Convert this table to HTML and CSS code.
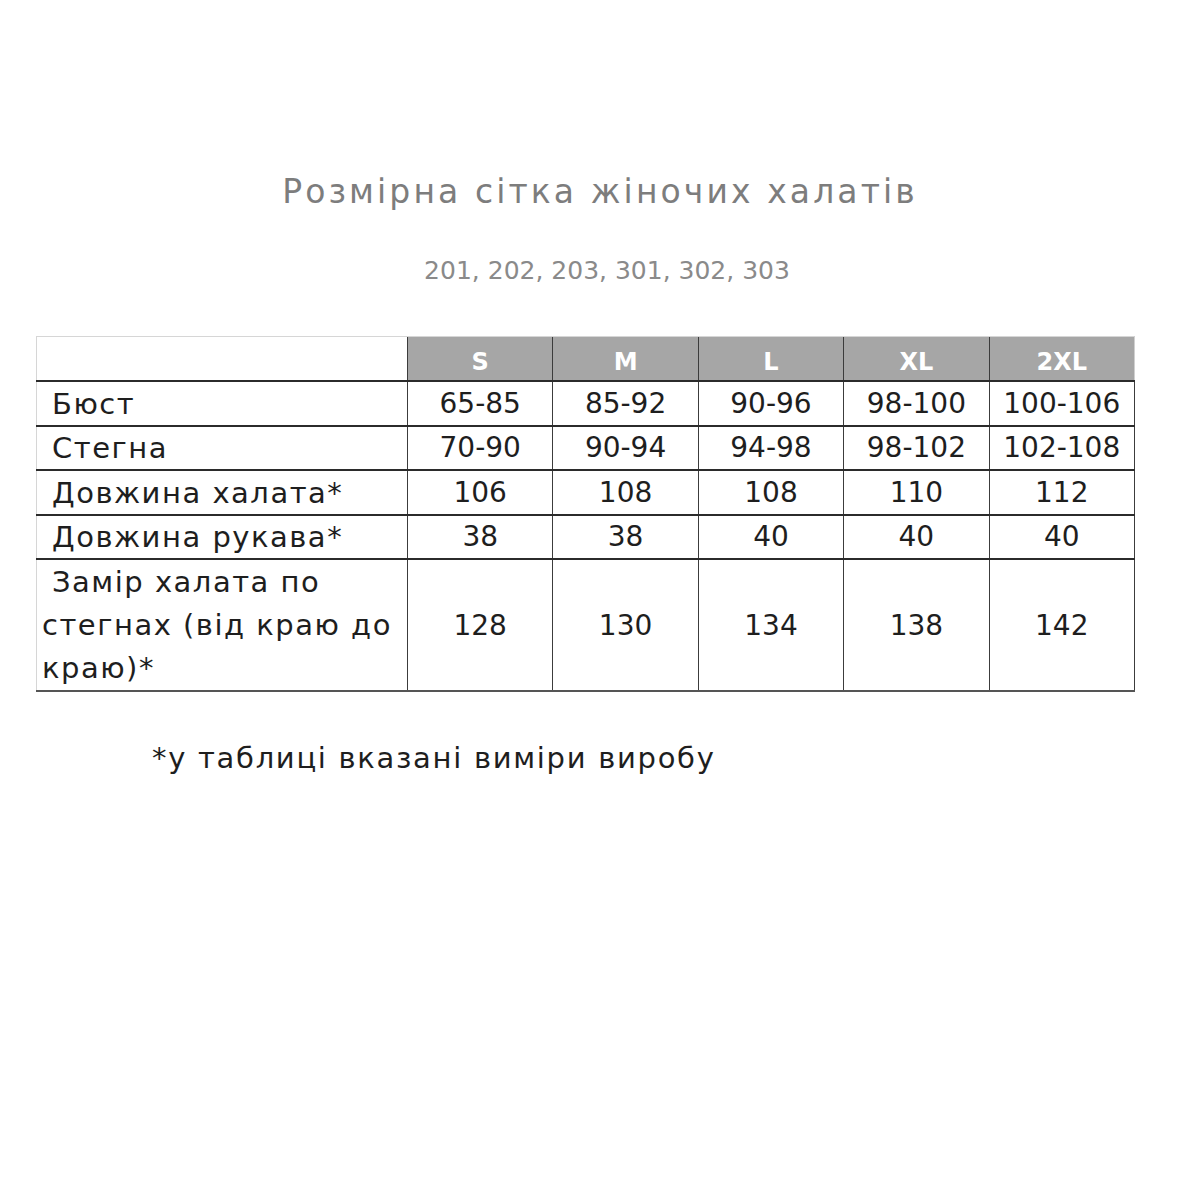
FILE: index.html
```html
<!DOCTYPE html>
<html lang="uk">
<head>
<meta charset="utf-8">
<title>Розмірна сітка жіночих халатів</title>
<link rel="stylesheet" href="styles.css">
</head>
<body>
<div class="page">
  <h1 class="title">Розмірна сітка жіночих халатів</h1>
  <p class="models">201, 202, 203, 301, 302, 303</p>
  <table class="sizes">
    <colgroup>
      <col class="col-label">
      <col class="col-size">
      <col class="col-size">
      <col class="col-size">
      <col class="col-size">
      <col class="col-size">
    </colgroup>
    <thead>
      <tr class="head-row">
        <th class="corner"></th>
        <th class="size">S</th>
        <th class="size">M</th>
        <th class="size">L</th>
        <th class="size">XL</th>
        <th class="size last">2XL</th>
      </tr>
    </thead>
    <tbody>
      <tr>
        <td class="label">Бюст</td>
        <td>65-85</td><td>85-92</td><td>90-96</td><td>98-100</td><td>100-106</td>
      </tr>
      <tr>
        <td class="label">Стегна</td>
        <td>70-90</td><td>90-94</td><td>94-98</td><td>98-102</td><td>102-108</td>
      </tr>
      <tr>
        <td class="label">Довжина халата*</td>
        <td>106</td><td>108</td><td>108</td><td>110</td><td>112</td>
      </tr>
      <tr>
        <td class="label">Довжина рукава*</td>
        <td>38</td><td>38</td><td>40</td><td>40</td><td>40</td>
      </tr>
      <tr class="tall">
        <td class="label multi">Замір халата по<br>стегнах (від краю до<br>краю)*</td>
        <td>128</td><td>130</td><td>134</td><td>138</td><td>142</td>
      </tr>
    </tbody>
  </table>
  <p class="note">*у таблиці вказані виміри виробу</p>
</div>
</body>
</html>
```
FILE: styles.css
```css
html, body {
  margin: 0;
  padding: 0;
  background: #ffffff;
}

.page {
  width: 1200px;
  padding-top: 168px;
  font-family: "DejaVu Sans", "Liberation Sans", sans-serif;
  color: #1e1e1e;
}

.title {
  margin: 0;
  text-align: center;
  font-weight: normal;
  font-size: 33px;
  line-height: 48px;
  letter-spacing: 3.1px;
  color: #7d7d7d;
}

.models {
  margin: 38px 0 0 0;
  text-align: center;
  font-size: 25px;
  line-height: 34px;
  color: #8a8a8a;
  padding-left: 14px;
}

.sizes {
  margin: 48px 0 0 36px;
  width: 1098px;
  table-layout: fixed;
  border-collapse: collapse;
}

.col-label {
  width: 371px;
}

.col-size {
  width: 145.4px;
}

.sizes th,
.sizes td {
  padding: 0;
  text-align: center;
  vertical-align: middle;
}

.head-row th {
  height: 43px;
  border-top: 1px solid #d6d6d6;
}

.corner {
  background: #ffffff;
  border-left: 1px solid #d6d6d6;
  border-bottom: 2px solid #2b2b2b;
}

.size {
  background: #a6a6a6;
  color: #ffffff;
  font-weight: bold;
  font-size: 24px;
  line-height: 30px;
  border-left: 1.5px solid #3c3c3c;
  border-bottom: 2px solid #2b2b2b;
}

.head-row .size {
  padding-top: 7px;
  height: 36px;
}

.size.last {
  border-right: 1px solid #d0d0d0;
}

.sizes td {
  height: 41.5px;
  font-size: 28px;
  line-height: 34px;
  padding-top: 1px;
  border-bottom: 2px solid #2b2b2b;
  border-left: 1.5px solid #3c3c3c;
  border-right: 1.5px solid #3c3c3c;
}

.sizes td.label {
  text-align: left;
  padding-left: 5px;
  text-indent: 10px;
  border-left: 1px solid #d6d6d6;
  font-size: 29px;
  letter-spacing: 1.5px;
  white-space: nowrap;
}

.tall td {
  height: 128.5px;
  border-bottom: 2px solid #555555;
}

.sizes td.multi {
  line-height: 43px;
}

.note {
  margin: 46px 0 0 152px;
  font-size: 29px;
  line-height: 40px;
  letter-spacing: 1.7px;
  color: #1e1e1e;
}
```
